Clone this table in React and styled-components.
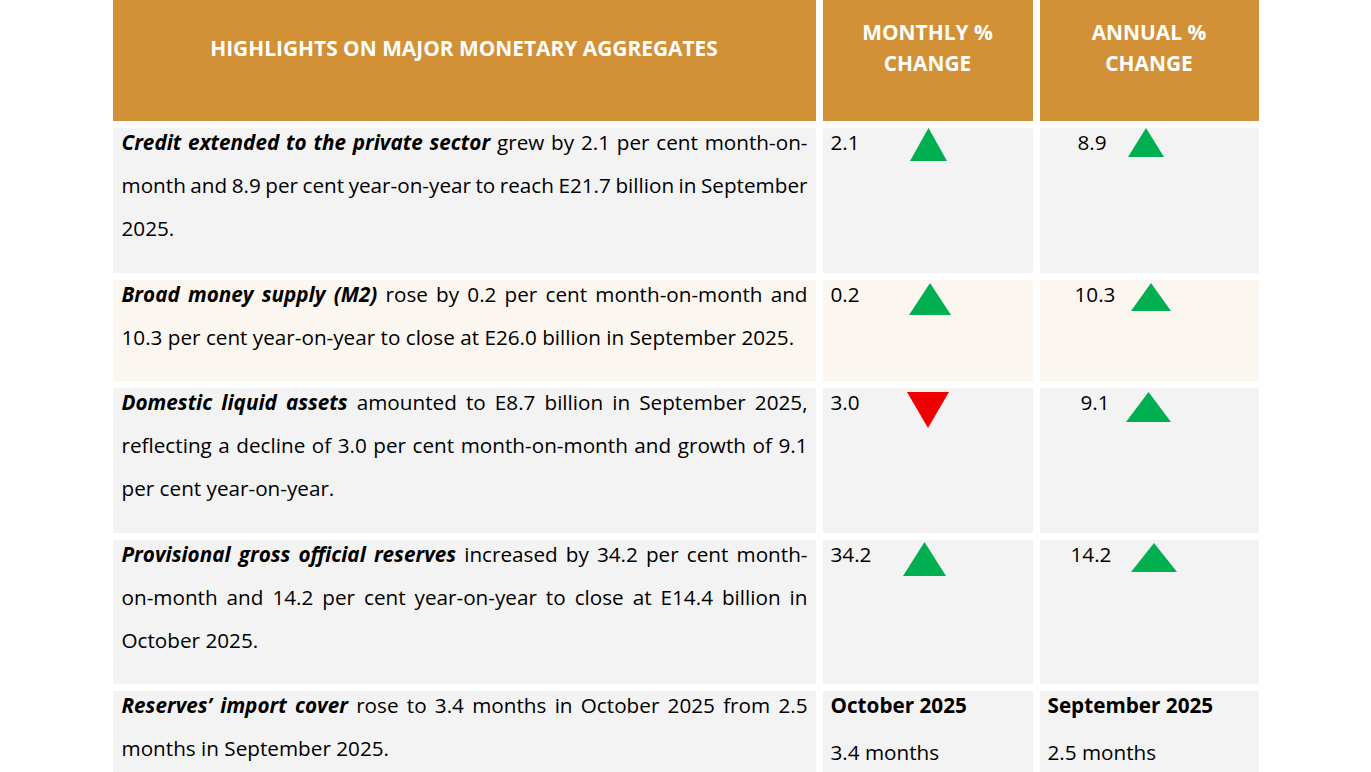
import React from "react";
import styled, { createGlobalStyle } from "styled-components";

const GlobalStyle = createGlobalStyle`
  html, body {
    margin: 0;
    padding: 0;
    background: #ffffff;
  }
  body {
    font-family: "Open Sans", "Liberation Sans", sans-serif;
    color: #000000;
  }
`;

const Page = styled.div`
  width: 100%;
  display: flex;
  justify-content: center;
`;

const Table = styled.table`
  border-collapse: separate;
  border-spacing: 7px;
  table-layout: fixed;
  width: 1160px;
  margin-top: -7px;
`;

const HeadCell = styled.th`
  background: #d29137;
  color: #ffffff;
  font-weight: 700;
  font-size: 20.9px;
  line-height: 31px;
  text-transform: uppercase;
  text-align: center;
  vertical-align: middle;
  height: 121px;
  box-sizing: border-box;
  padding: 0 10px 25px;
`;

const Cell = styled.td`
  background: ${(p) => (p.$tint ? "#fbf7f0" : "#f3f3f3")};
  vertical-align: top;
  padding: 0 8px 22.6px ${(p) => p.$pl || 8}px;
  font-size: 20.7px;
  line-height: 43px;
`;

const Text = styled.p`
  margin: -7px 0 0;
  text-align: justify;
  word-spacing: ${(p) => p.$squeeze || 0}px;

  strong {
    font-weight: 700;
    font-style: italic;
  }
`;

const ValueLine = styled.div`
  display: flex;
  align-items: flex-start;
`;

const Value = styled.span`
  display: block;
  box-sizing: border-box;
  flex: 0 0 ${(p) => p.$box}px;
  padding-left: ${(p) => p.$indent || 0}px;
  margin-top: -7px;
`;

const Label = styled.p`
  margin: ${(p) => (p.$first ? "-7px" : "4px")} 0 0;
  font-weight: ${(p) => (p.$bold ? 700 : 400)};
`;

const ArrowSvg = styled.svg`
  display: block;
  flex: none;
  margin-top: ${(p) => p.$dy}px;
`;

const Arrow = ({ w, h, dy, down }) => (
  <ArrowSvg $dy={dy} width={w} height={h} viewBox={`0 0 ${w} ${h}`}>
    {down ? (
      <polygon points={`0,0 ${w},0 ${w / 2},${h}`} fill="#ee0000" />
    ) : (
      <polygon points={`${w / 2},0 ${w},${h} 0,${h}`} fill="#00b050" />
    )}
  </ArrowSvg>
);

const rows = [
  {
    lead: "Credit extended to the private sector",
    rest: " grew by 2.1 per cent month-on-month and 8.9 per cent year-on-year to reach E21.7 billion in September 2025.",
    squeeze: -2.5,
    m: { v: "2.1", box: 79, indent: 0, a: { w: 37, h: 33, dy: 0 } },
    y: { v: "8.9", box: 80, indent: 30, a: { w: 36, h: 29, dy: 0 } },
  },
  {
    tint: true,
    lead: "Broad money supply (M2)",
    rest: " rose by 0.2 per cent month-on-month and 10.3 per cent year-on-year to close at E26.0 billion in September 2025.",
    m: { v: "0.2", box: 78, indent: 0, a: { w: 42, h: 32, dy: 3 } },
    y: { v: "10.3", box: 83, indent: 27, a: { w: 40, h: 28, dy: 3 } },
  },
  {
    lead: "Domestic liquid assets",
    rest: " amounted to E8.7 billion in September 2025, reflecting a decline of 3.0 per cent month-on-month and growth of 9.1 per cent year-on-year.",
    m: { v: "3.0", box: 76, indent: 0, a: { w: 42, h: 36, dy: 4, down: true } },
    y: { v: "9.1", box: 78, indent: 33, a: { w: 45, h: 30, dy: 4 } },
  },
  {
    lead: "Provisional gross official reserves",
    rest: " increased by 34.2 per cent month-on-month and 14.2 per cent year-on-year to close at E14.4 billion in October 2025.",
    m: { v: "34.2", box: 72, indent: 0, a: { w: 43, h: 34, dy: 2 } },
    y: { v: "14.2", box: 83, indent: 23, a: { w: 46, h: 29, dy: 3 } },
  },
];

const Change = ({ v, box, indent, a }) => (
  <ValueLine>
    <Value $box={box} $indent={indent}>
      {v}
    </Value>
    <Arrow {...a} />
  </ValueLine>
);

export default function App() {
  return (
    <>
      <GlobalStyle />
      <Page>
        <Table>
          <colgroup>
            <col style={{ width: 703 }} />
            <col style={{ width: 210 }} />
            <col style={{ width: 219 }} />
          </colgroup>
          <thead>
            <tr>
              <HeadCell>Highlights on major monetary aggregates</HeadCell>
              <HeadCell>
                Monthly %<br />
                change
              </HeadCell>
              <HeadCell>
                Annual %<br />
                change
              </HeadCell>
            </tr>
          </thead>
          <tbody>
            {rows.map((r) => (
              <tr key={r.lead}>
                <Cell $tint={r.tint} $pl={9}>
                  <Text $squeeze={r.squeeze}>
                    <strong>{r.lead}</strong>
                    {r.rest}
                  </Text>
                </Cell>
                <Cell $tint={r.tint}>
                  <Change {...r.m} />
                </Cell>
                <Cell $tint={r.tint}>
                  <Change {...r.y} />
                </Cell>
              </tr>
            ))}
            <tr>
              <Cell $pl={9}>
                <Text>
                  <strong>Reserves’ import cover</strong> rose to 3.4 months in
                  October 2025 from 2.5 months in September 2025.
                </Text>
              </Cell>
              <Cell>
                <Label $first $bold>
                  October 2025
                </Label>
                <Label>3.4 months</Label>
              </Cell>
              <Cell>
                <Label $first $bold>
                  September 2025
                </Label>
                <Label>2.5 months</Label>
              </Cell>
            </tr>
          </tbody>
        </Table>
      </Page>
    </>
  );
}
